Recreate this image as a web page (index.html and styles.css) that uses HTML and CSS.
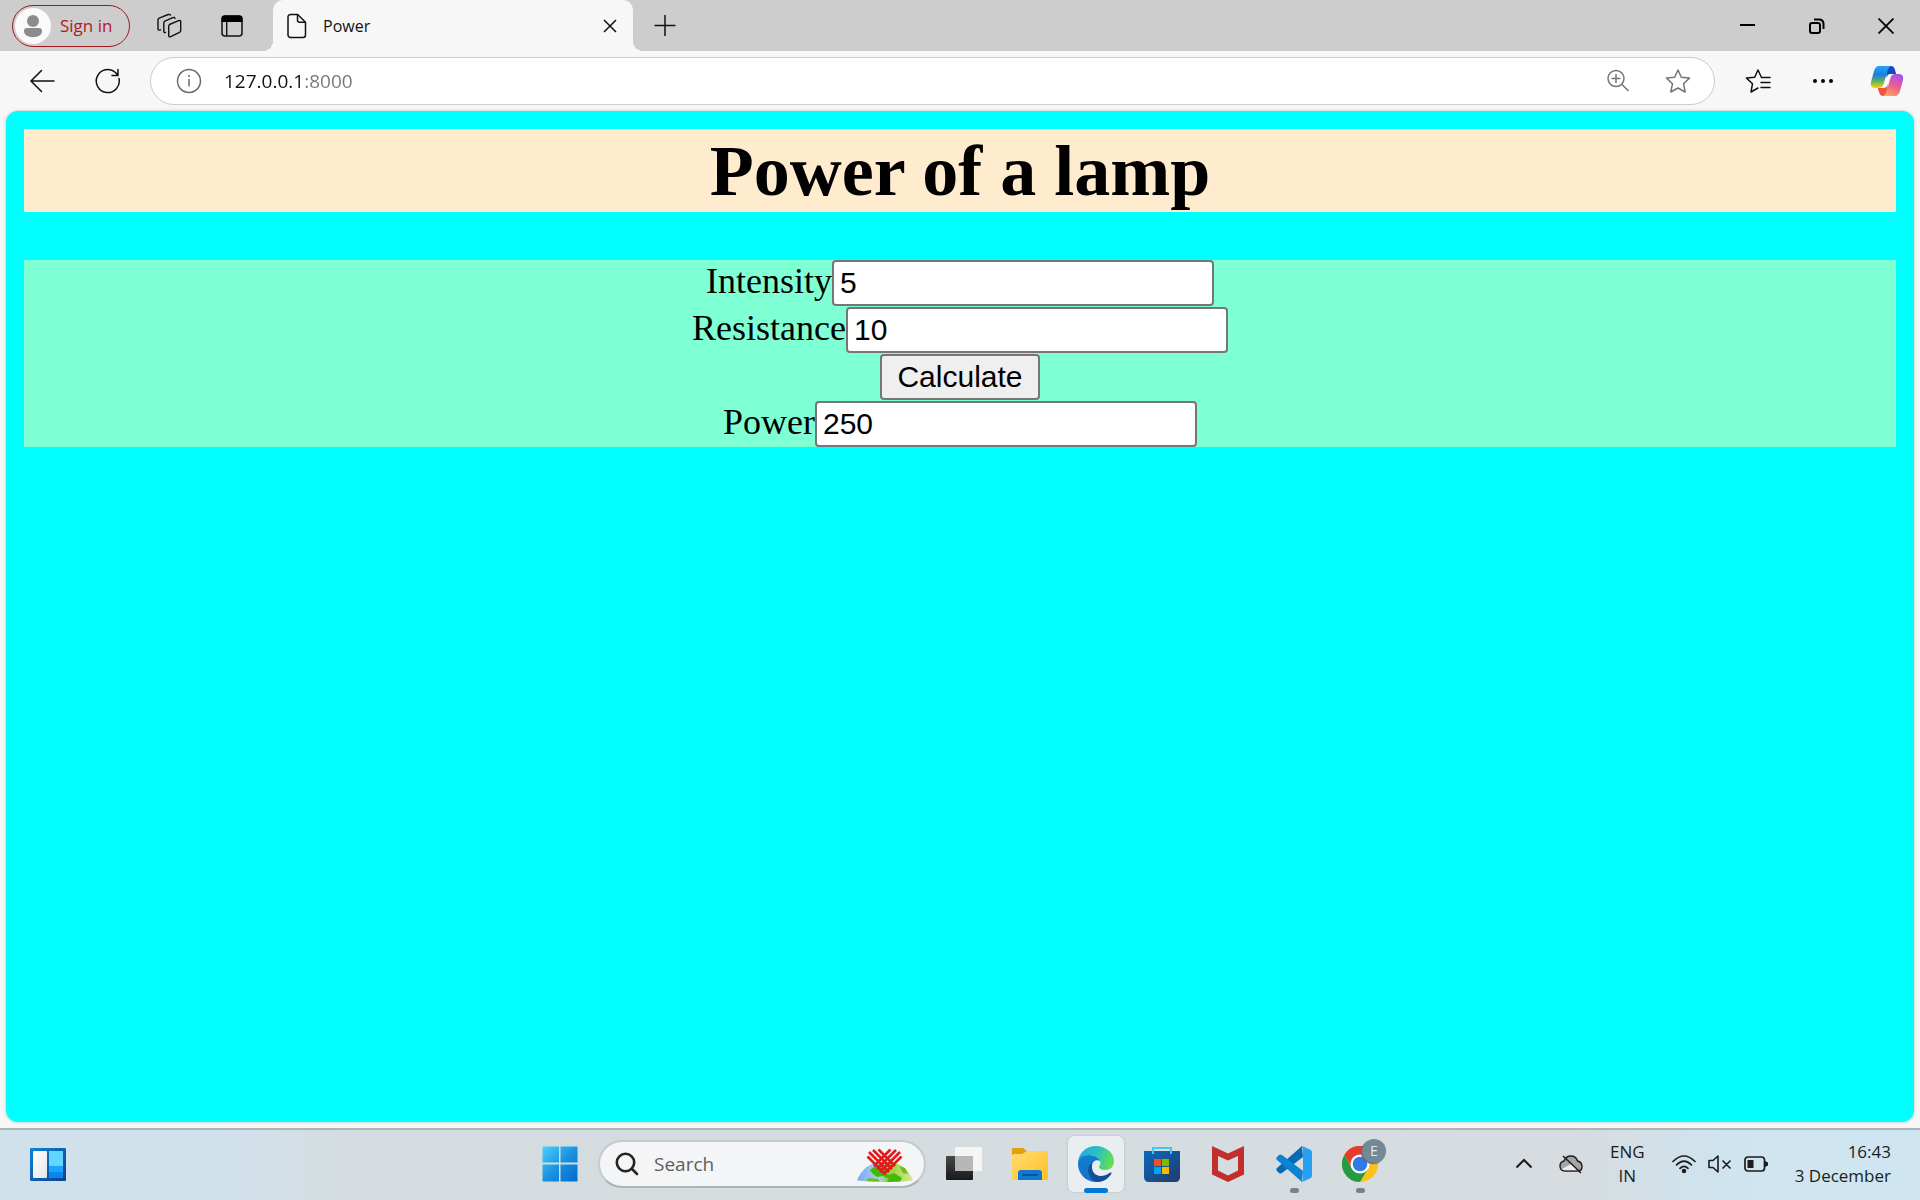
FILE: index.html
```html
<!DOCTYPE html>
<html lang="en">
<head>
<meta charset="utf-8">
<title>Power</title>
<link rel="stylesheet" href="styles.css">
</head>
<body>
<header class="tabstrip">
  <button class="profile" type="button">
    <svg width="36" height="36" viewBox="0 0 36 36" aria-hidden="true"><circle cx="18" cy="18" r="18" fill="#fafafa"/><circle cx="18" cy="13" r="6" fill="#8b8b8b"/><path d="M12 20h12a3 3 0 0 1 3 3c0 4-4 6-9 6s-9-2-9-6a3 3 0 0 1 3-3z" fill="#8b8b8b"/></svg>
    <span>Sign in</span>
  </button>
  <button class="icon strip-icon" type="button" aria-label="Workspaces">
    <svg width="26" height="26" viewBox="0 0 26 26" fill="none" stroke="#111" stroke-width="1.4" stroke-linejoin="round" stroke-linecap="round"><path d="M13.500 11.500l9-3.800q2.200-.8 2.200 1.300v8.500q0 1.300-1.200 1.900l-8.700 4.200q-2.100.8-2.100-1.200v-9q0-1.300.8-1.900z"/><path d="M9.500 19.500q-1.700.6-1.700-1.200v-8.500q0-1.200 1-1.700l8-3.500q1.800-.6 2.200.8"/><path d="M4.500 16.800q-2.500 1-2.500-1V7q0-1.200 1.200-1.800l9-3.700q1.600-.5 2.300.6"/></svg>
  </button>
  <button class="icon strip-icon" type="button" aria-label="Tab actions">
    <svg width="22" height="22" viewBox="0 0 22 22"><rect x="1" y="1" width="20" height="20" rx="3" fill="none" stroke="#111" stroke-width="1.500"/><path d="M.5 7V4a3.500 3.500 0 0 1 3.500-3.500h14A3.500 3.500 0 0 1 21.500 4v3z"/><path d="M5.700 7v14" stroke="#111" stroke-width="1.400"/></svg>
  </button>
  <div class="tab">
    <svg width="20" height="26" viewBox="0 0 20 26" fill="none" stroke="#111" stroke-width="1.500" stroke-linejoin="round" aria-hidden="true"><path d="M3.500 1.500h7.200l7.800 7.800v12.700a2.500 2.500 0 0 1-2.500 2.500H3.500A2.500 2.500 0 0 1 1 22V4a2.500 2.500 0 0 1 2.500-2.500z"/><path d="M10.500 1.700v5.600a2 2 0 0 0 2 2h5.800"/></svg>
    <span class="tab-title">Power</span>
    <button class="icon" type="button" aria-label="Close tab"><svg width="14" height="14" viewBox="0 0 14 14" stroke="#111" stroke-width="1.500"><path d="M1 1l12 12M13 1L1 13"/></svg></button>
  </div>
  <button class="icon new-tab" type="button" aria-label="New tab"><svg width="22" height="22" viewBox="0 0 22 22" stroke="#111" stroke-width="1.500"><path d="M11 0v21M.5 10.500h21"/></svg></button>
  <div class="window-buttons">
    <button class="icon" type="button" aria-label="Minimise"><svg width="16" height="16" viewBox="0 0 16 16" stroke="#000" stroke-width="2"><path d="M0 7h15"/></svg></button>
    <button class="icon" type="button" aria-label="Restore"><svg width="16" height="16" viewBox="0 0 16 16" fill="none" stroke="#000" stroke-width="2"><rect x="1" y="5" width="10" height="10" rx="2"/><path d="M5 1.500h5q4.500 0 4.500 4.500v5"/></svg></button>
    <button class="icon" type="button" aria-label="Close"><svg width="16" height="16" viewBox="0 0 16 16" stroke="#000" stroke-width="1.800"><path d="M.5.5l15 15M15.500.5l-15 15"/></svg></button>
  </div>
</header>

<nav class="toolbar">
  <button class="icon nav-button" type="button" aria-label="Back"><svg width="26" height="24" viewBox="0 0 26 24" fill="none" stroke="#111" stroke-width="1.500" stroke-linecap="round"><path d="M25 12H2M12.500 1.500L2 12l10.500 10.500"/></svg></button>
  <button class="icon nav-button" type="button" aria-label="Refresh"><svg width="26" height="26" viewBox="0 0 26 26" fill="none" stroke="#111" stroke-width="1.500" stroke-linecap="round"><path d="M24 10.500A11.500 11.500 0 1 1 20.500 4.500L23 7.500M23 1.500v6h-6"/></svg></button>
  <div class="address">
    <svg width="26" height="26" viewBox="0 0 26 26" fill="none" stroke="#6b6b6b" stroke-width="1.500" aria-hidden="true"><circle cx="13" cy="13" r="11.500"/><path d="M13 11v7.500M13 7v2"/></svg>
    <input class="url" type="text" value="127.0.0.1:8000" aria-label="Address">
    <button class="icon" type="button" aria-label="Zoom"><svg width="24" height="24" viewBox="0 0 24 24" fill="none" stroke="#757575" stroke-width="1.500"><circle cx="10" cy="9.500" r="8"/><path d="M16 15.500l6.500 6.500M10 5v9M5.500 9.500h9"/></svg></button>
    <button class="icon" type="button" aria-label="Add to favourites"><svg width="26" height="26" viewBox="0 0 26 26" fill="none" stroke="#757575" stroke-width="1.500" stroke-linejoin="round"><path d="M13 2l3.300 7.200 8.200.9-6 5.600 1.700 8.300L13 20l-7.200 4 1.700-8.300-6-5.600 8.200-.9z"/></svg></button>
  </div>
  <div class="tools">
    <button class="icon" type="button" aria-label="Favourites"><svg width="26" height="26" viewBox="0 0 26 26" fill="none" stroke="#111" stroke-width="1.500" stroke-linejoin="round" stroke-linecap="round"><path d="M25 9.500h-8.500L13 2 9.700 9.200l-8.200.9 6 5.600L6 24l7-4M16 14.500h9M16 19.500h9"/></svg></button>
    <button class="icon" type="button" aria-label="Settings and more"><svg width="22" height="6" viewBox="0 0 22 6"><circle cx="3" cy="3" r="2"/><circle cx="11" cy="3" r="2"/><circle cx="19" cy="3" r="2"/></svg></button>
    <button class="icon" type="button" aria-label="Copilot">
      <svg width="34" height="32" viewBox="0 0 34 32">
        <defs>
          <linearGradient id="cpA" x1="0" y1="0" x2="0" y2="1"><stop offset="0" stop-color="#24a8f5"/><stop offset=".4" stop-color="#1c7ee0"/><stop offset=".7" stop-color="#5fb457"/><stop offset="1" stop-color="#ffd500"/></linearGradient>
          <linearGradient id="cpB" x1=".7" y1="0" x2=".3" y2="1"><stop offset="0" stop-color="#a552ee"/><stop offset=".5" stop-color="#ee5a95"/><stop offset="1" stop-color="#ffa25b"/></linearGradient>
        </defs>
        <path d="M16 1h5q3 0 4 4l1.200 4H20q-2.500 0-3.500 4z" fill="#1549c4"/>
        <path d="M18 31h-5q-3 0-4-4l-1.200-4H14q2.500 0 3.500-4z" fill="#f0533f"/>
        <path d="M9 1h12q-2.500 1-3.500 5l-4 13q-1.200 4-4.500 4H5q-5 0-4-6L4 6q1.500-5 5-5z" fill="url(#cpA)"/>
        <path d="M25 31H13q2.500-1 3.500-5l4-13Q21.700 9 25 9h4q5 0 4 6l-3 11q-1.500 5-5 5z" fill="url(#cpB)"/>
        <path d="M18.500 10h2.300q-1.300 1.500-2 4l-2.500 8h-2.800q1.200-1.500 2-4z" fill="#fff"/>
      </svg>
    </button>
  </div>
</nav>

<main class="viewport">
  <div class="page">
    <h1 class="heading">Power of a lamp</h1>
    <form class="lamp-form">
      <div class="row"><label for="intensity">Intensity</label><input class="field" id="intensity" type="text" value="5"></div>
      <div class="row"><label for="resistance">Resistance</label><input class="field" id="resistance" type="text" value="10"></div>
      <div class="row"><button class="calculate" type="button">Calculate</button></div>
      <div class="row"><label for="power">Power</label><input class="field" id="power" type="text" value="250"></div>
    </form>
  </div>
</main>

<footer class="taskbar">
  <div class="taskbar-start">
    <button class="icon" type="button" aria-label="Widgets">
      <svg width="36" height="34" viewBox="0 0 36 34"><defs><linearGradient id="wg" x1="0" y1="0" x2="1" y2="1"><stop offset="0" stop-color="#0a84d8"/><stop offset="1" stop-color="#10408c"/></linearGradient><linearGradient id="wp" x1="0" y1="0" x2="1" y2="1"><stop offset="0" stop-color="#fff"/><stop offset="1" stop-color="#e6e6e6"/></linearGradient></defs><rect y="1" width="36" height="33" rx="1" fill="url(#wg)"/><rect x="3" y="4" width="14" height="27" rx="1" fill="url(#wp)"/><path d="M19 4h14v15H19z" fill="#62d6ff"/><path d="M19 19h14v6H19z" fill="#1ba4fa"/><path d="M19 25h14v6H19z" fill="#0786ee"/></svg>
    </button>
  </div>
  <div class="taskbar-apps">
    <button class="app" type="button" aria-label="Start">
      <svg width="36" height="36" viewBox="0 0 36 36"><defs><linearGradient id="st" x1="0" y1="0" x2="1" y2="1"><stop offset="0" stop-color="#4fd0ff"/><stop offset=".5" stop-color="#1a93e0"/><stop offset="1" stop-color="#006ccb"/></linearGradient></defs><path d="M1 .5h16v16H.5V1zM18.500.5h17v16h-17zM.5 18.500H17v17H.5zM18.500 18.500h17v17h-17z" fill="url(#st)"/></svg>
    </button>
    <div class="search">
      <svg width="24" height="24" viewBox="0 0 24 24" fill="none" stroke="#242424" stroke-width="2.600" stroke-linecap="round" aria-hidden="true"><circle cx="10.500" cy="10.500" r="8.700"/><path d="M17 17l5 5"/></svg>
      <input type="text" placeholder="Search" aria-label="Search">
      <svg width="58" height="36" viewBox="0 0 58 36" aria-hidden="true">
        <defs><linearGradient id="gl" x1="0" y1="0" x2="1" y2="0"><stop offset="0" stop-color="#79a9f4"/><stop offset=".4" stop-color="#a6d3f0"/><stop offset=".55" stop-color="#8fd32f"/><stop offset="1" stop-color="#d4e89a"/></linearGradient></defs>
        <path d="M1 34.500Q8 16 29 15.500 50 16 57 34.500q-28 3-56 0z" fill="url(#gl)"/>
        <path d="M14 24l5-4 7-2 6 6-4 3 5 2 5-2 8 5-2 3.500-13 .5 2-3-6-3-6 1-4-3z" fill="#45b80b"/>
        <path d="M10 35l3-3 9 1 2 2.500zM43 20l6 2 3 6-5-1z" fill="#70bd1c"/>
        <g stroke="#e01b1b" stroke-width="2.600" fill="none"><path d="M11.500 10.500L29 28M13 6L33 26M17 4L36 23M22.500 3.500L39 20M45.500 10.500L28 28M44 6L24 26M40 4L21 23M34.500 3.500L18 20"/></g>
      </svg>
    </div>
    <button class="app" type="button" aria-label="Task view">
      <svg width="36" height="36" viewBox="0 0 36 36"><defs><linearGradient id="tv" x1="0" y1="0" x2="0" y2="1"><stop offset="0" stop-color="#484848"/><stop offset="1" stop-color="#191919"/></linearGradient></defs><rect y="10" width="27" height="24" rx="1" fill="url(#tv)"/><rect x="9" y="1" width="27" height="24" rx="1" fill="#f5f5f5"/><path d="M9 10h18v15H9z" fill="#b7b7b7"/></svg>
    </button>
    <button class="app" type="button" aria-label="File Explorer">
      <svg width="36" height="36" viewBox="0 0 36 36"><defs><linearGradient id="fo" x1="0" y1="0" x2="1" y2="1"><stop offset="0" stop-color="#ffdc73"/><stop offset="1" stop-color="#ffc125"/></linearGradient></defs><path d="M0 3q0-1 1-1h10l4 3h20q1 0 1 1v9H0z" fill="#e2a006"/><path d="M0 10q0-2 2-2h8l5-3h20q1 0 1 1v28H0z" fill="url(#fo)"/><path d="M6 34v-7q0-3 3-3h18q3 0 3 3v7z" fill="#0f78cf"/><path d="M11 29h14" stroke="#07559d" stroke-width="2" stroke-linecap="round"/></svg>
    </button>
    <button class="app app-active" type="button" aria-label="Edge">
      <svg width="36" height="36" viewBox="0 0 36 36"><defs><linearGradient id="e1" x1="0" y1=".3" x2="1" y2=".6"><stop offset="0" stop-color="#25a8e7"/><stop offset=".5" stop-color="#2bc3bb"/><stop offset="1" stop-color="#69e04a"/></linearGradient><linearGradient id="e2" x1="0" y1="0" x2="0" y2="1"><stop offset="0" stop-color="#137fcb"/><stop offset="1" stop-color="#1470c8"/></linearGradient></defs><path d="M0 18C0 7 8 0 18 0s18 7 18 15c0 6-4 9-9 9-4 0-6-1.500-6-3 0-1 1.500-1.500 1.500-4C22 12 16 9 11 9 5 9 1 13 0 18z" fill="url(#e1)"/><path d="M0 18C0 12 5 9 11 9c6 0 11 4 11 6-4-2-8 0-8 6 0 7 6 12 13 12-3 2-6 3-9 3C8 36 0 28 0 18z" fill="url(#e2)"/><path d="M14 17c-2 8 3 13 9 13 5 0 8-3 9.500-3.500 1-.2 1.300.5.8 1.500C30 33 25 36 20 36 12 35 6 23 14 17z" fill="#114f9c"/></svg>
      <span class="mark mark-active"></span>
    </button>
    <button class="app" type="button" aria-label="Microsoft Store">
      <svg width="36" height="36" viewBox="0 0 36 36"><defs><linearGradient id="ms" x1="0" y1="0" x2="1" y2="1"><stop offset="0" stop-color="#0b6bbb"/><stop offset="1" stop-color="#233a6c"/></linearGradient></defs><path d="M0 5h36v26q0 5-5 5H5q-5 0-5-5z" fill="url(#ms)"/><path d="M9 8V2h18v6" fill="none" stroke="#3cc8f5" stroke-width="2"/><path d="M10 13h7v7h-7z" fill="#f25022"/><path d="M18 13h7v7h-7z" fill="#7fba00"/><path d="M10 21h7v7h-7z" fill="#00a4ef"/><path d="M18 21h7v7h-7z" fill="#ffb900"/></svg>
    </button>
    <button class="app" type="button" aria-label="McAfee">
      <svg width="36" height="36" viewBox="0 0 36 36"><path d="M2 0l16 7.500L34 0v28.500L18 36 2 28.500zM8 10v14.500l10 5 10-5V10l-10 4.500z" fill="#c12e2c" fill-rule="evenodd"/></svg>
    </button>
    <button class="app" type="button" aria-label="Visual Studio Code">
      <svg width="36" height="36" viewBox="0 0 36 36"><path d="M26 0L1 22q-1.500 1.500 0 3l2 2q1 1 3 0L27 11z" fill="#0669b4"/><path d="M26 36L1 14q-1.500-1.500 0-3l2-2q1-1 3 0l21 16z" fill="#0a83d2"/><path d="M26 0l8 3.500Q36 4.500 36 6v24q0 1.500-2 2.500L26 36l1-3V3z" fill="#27a2f2"/></svg>
      <span class="mark"></span>
    </button>
    <button class="app" type="button" aria-label="Chrome">
      <svg width="36" height="36" viewBox="0 0 36 36"><circle cx="18" cy="18" r="18" fill="#fcc21b"/><path d="M18 18L2.400 9A18 18 0 0 1 33.600 9z" fill="#e53c30"/><path d="M18 9h15.600A18 18 0 0 0 2.400 9l8 13z" fill="#e53c30"/><path d="M2.400 9A18 18 0 0 0 18 36l8-13.500-15.500.5z" fill="#249a42"/><circle cx="18" cy="18" r="9.500" fill="#fff"/><circle cx="18" cy="18" r="7.300" fill="#3179e9"/></svg>
      <span class="badge">E</span>
      <span class="mark"></span>
    </button>
  </div>
  <div class="tray">
    <button class="icon" type="button" aria-label="Show hidden icons"><svg width="16" height="12" viewBox="0 0 16 12" fill="none" stroke="#1c1c1c" stroke-width="2"><path d="M.5 9.500L8 2l7.500 7.500"/></svg></button>
    <button class="icon" type="button" aria-label="OneDrive"><svg width="24" height="20" viewBox="0 0 24 20"><path d="M6 17q-5 0-5-5 0-4 4-5 2-5 7-5t6.500 5Q23 8 23 12.500q0 4.500-4.500 4.500z" fill="#a5a5a5" stroke="#1c1c1c" stroke-width="1.400"/><path d="M3 15l9-5 7 6.300H6q-2 0-3-1.300z" fill="#eee"/><path d="M4 2l18 17" stroke="#1c1c1c" stroke-width="1.500"/></svg></button>
    <button class="icon language" type="button">ENG<br>IN</button>
    <div class="status">
      <svg width="24" height="20" viewBox="0 0 24 20" fill="none" stroke="#1c1c1c" stroke-width="1.700" stroke-linecap="round" role="img" aria-label="Wi-Fi"><path d="M1 7.500q11-11 22 0M4.500 11q7.500-7.500 15 0M8 14.300q4-4 8 0"/><circle cx="12" cy="17" r="1.400" fill="#1c1c1c"/></svg>
      <svg width="24" height="18" viewBox="0 0 24 18" fill="none" stroke="#1c1c1c" stroke-width="1.600" stroke-linejoin="round" role="img" aria-label="Muted"><path d="M1 5.500h4L10 1v16l-5-4.500H1zM14.500 5.500l8 8M22.500 5.500l-8 8"/></svg>
      <svg width="24" height="16" viewBox="0 0 24 16" role="img" aria-label="Battery"><rect x="1" y="1" width="19.500" height="14" rx="3" fill="none" stroke="#1c1c1c" stroke-width="1.700"/><path d="M3.500 4h6v8h-6zM21 5l3 1.500v3L21 11z" fill="#1c1c1c"/></svg>
    </div>
    <time class="clock">16:43<br>3 December</time>
  </div>
</footer>
</body>
</html>
```
FILE: styles.css
```css
* { box-sizing: border-box; }

body {
  margin: 0;
  min-height: 100vh;
  display: flex;
  flex-direction: column;
  background: #f7f7f7;
  font-family: "Open Sans", "Noto Sans", sans-serif;
  font-size: 17px;
  color: #1c1c1c;
}

svg { display: block; flex: none; }
button, input { font: inherit; color: inherit; margin: 0; }

.icon {
  display: flex;
  align-items: center;
  justify-content: center;
  padding: 0;
  border: 0;
  background: none;
}

/* Tab strip */
.tabstrip {
  display: flex;
  align-items: center;
  height: 51px;
  padding-left: 12px;
  background: #cdcdcd;
}
.profile {
  display: flex;
  align-items: center;
  gap: 9px;
  width: 118px;
  height: 42px;
  padding: 0 0 0 2px;
  border: 1px solid #a4161a;
  border-radius: 21px;
  background: none;
  color: #b3191e;
}
.strip-icon { width: 26px; margin-left: 26px; }
.strip-icon + .strip-icon { margin-left: 37px; }
.tab {
  position: relative;
  display: flex;
  align-items: center;
  width: 360px;
  height: 51px;
  margin-left: 28px;
  padding: 0 16px 0 14px;
  border-radius: 10px 10px 0 0;
  background: #f7f7f7;
  font-size: 16px;
  color: #111;
}
.tab::before,
.tab::after {
  content: "";
  position: absolute;
  bottom: 0;
  width: 10px;
  height: 10px;
}
.tab::before { right: 100%; background: radial-gradient(circle at 0 0, transparent 10px, #f7f7f7 10px); }
.tab::after { left: 100%; background: radial-gradient(circle at 100% 0, transparent 10px, #f7f7f7 10px); }
.tab-title { flex: 1; margin-left: 16px; }
.new-tab { margin-left: 21px; }
.window-buttons { display: flex; gap: 53px; margin-left: auto; padding-right: 26px; }

/* Toolbar */
.toolbar {
  display: flex;
  align-items: center;
  height: 60px;
  padding: 0 16px 0 24px;
}
.nav-button { width: 36px; }
.nav-button + .nav-button { margin-left: 30px; }
.address {
  flex: 1;
  display: flex;
  align-items: center;
  gap: 22px;
  height: 48px;
  margin-left: 24px;
  padding: 0 23px 0 25px;
  border: 1px solid #cccccc;
  border-radius: 24px;
  background: #fff;
}
.url {
  flex: 1;
  min-width: 0;
  padding: 0;
  border: 0;
  font-size: 19px;
  color: transparent;
  background: linear-gradient(90deg, #111 80px, #767676 80px);
  background-clip: text;
}
.address .icon + .icon { margin-left: 13px; }
.tools { display: flex; align-items: center; gap: 36px; margin-left: 30px; }
.tools .icon:nth-child(2) { margin-left: 5px; }

/* Lamp page */
.viewport { flex: 1; display: flex; padding: 0 6px 6px; }
.page {
  flex: 1;
  padding: 18px;
  border-radius: 12px;
  background: cyan;
  box-shadow: 0 0 3px #b5b5b5;
  font-family: "Liberation Serif", "Times New Roman", serif;
  color: #000;
}
.heading {
  margin: 0 0 48px;
  padding-top: 1px;
  background: blanchedalmond;
  font-size: 72px;
  line-height: 82px;
  text-align: center;
}
.lamp-form {
  display: flex;
  flex-direction: column;
  gap: 1px;
  background: aquamarine;
  font-size: 36px;
  line-height: 42px;
}
.row { display: flex; align-items: baseline; justify-content: center; height: 46px; }
.field,
.calculate {
  height: 46px;
  border: 2px solid #767676;
  border-radius: 4px;
  font-family: "Liberation Sans", Arial, sans-serif;
  font-size: 30px;
}
.field { width: 382px; padding: 0 6px; background: #fff; }
.calculate { padding: 0 15px; background: #efefef; }

/* Taskbar */
.taskbar {
  display: grid;
  grid-template-columns: 1fr auto 1fr;
  align-items: center;
  height: 72px;
  padding-bottom: 2px;
  border-top: 2px solid #adb3b6;
  background: linear-gradient(90deg, #d1e1ec 0%, #d1e1eb 12%, #d5dcdf 19%, #d6dcdf 82%, #cfe4ef 90%, #cfe6f2 100%);
}
.taskbar-start { padding-left: 30px; }
.taskbar-apps { display: flex; align-items: center; gap: 10px; }
.app {
  position: relative;
  display: flex;
  align-items: center;
  justify-content: center;
  width: 56px;
  height: 56px;
  padding: 0;
  border: 0;
  border-radius: 6px;
  background: none;
}
.app-active { background: #ebeef0; box-shadow: 0 0 2px #aab0b3; }
.mark {
  position: absolute;
  left: 50%;
  bottom: -1px;
  width: 9px;
  height: 5px;
  margin-left: -4px;
  border-radius: 3px;
  background: #7d8183;
}
.mark-active { width: 24px; margin-left: -12px; background: #0078d4; }
.badge {
  position: absolute;
  top: 3px;
  right: 2px;
  width: 24px;
  height: 24px;
  border-radius: 12px;
  background: #738a96;
  box-shadow: -1px 1px 1px #566872;
  color: #e4eaed;
  font-size: 14px;
  line-height: 24px;
  text-align: center;
}
.search {
  display: flex;
  align-items: center;
  width: 328px;
  height: 48px;
  padding: 0 10px 0 15px;
  border: 2px solid #c5cacd;
  border-bottom-color: #adb2b4;
  border-radius: 24px;
  background: #f3f5f6;
}
.search input {
  flex: 1;
  min-width: 0;
  padding: 0 0 0 15px;
  border: 0;
  background: none;
  font-size: 19px;
}
.search input::placeholder { color: #606060; opacity: 1; }
.tray {
  display: flex;
  align-items: center;
  justify-content: flex-end;
  gap: 27px;
  padding-right: 29px;
  line-height: 24px;
}
.language { display: block; text-align: center; }
.status { display: flex; align-items: center; gap: 12px; }
.clock { text-align: right; }
```
